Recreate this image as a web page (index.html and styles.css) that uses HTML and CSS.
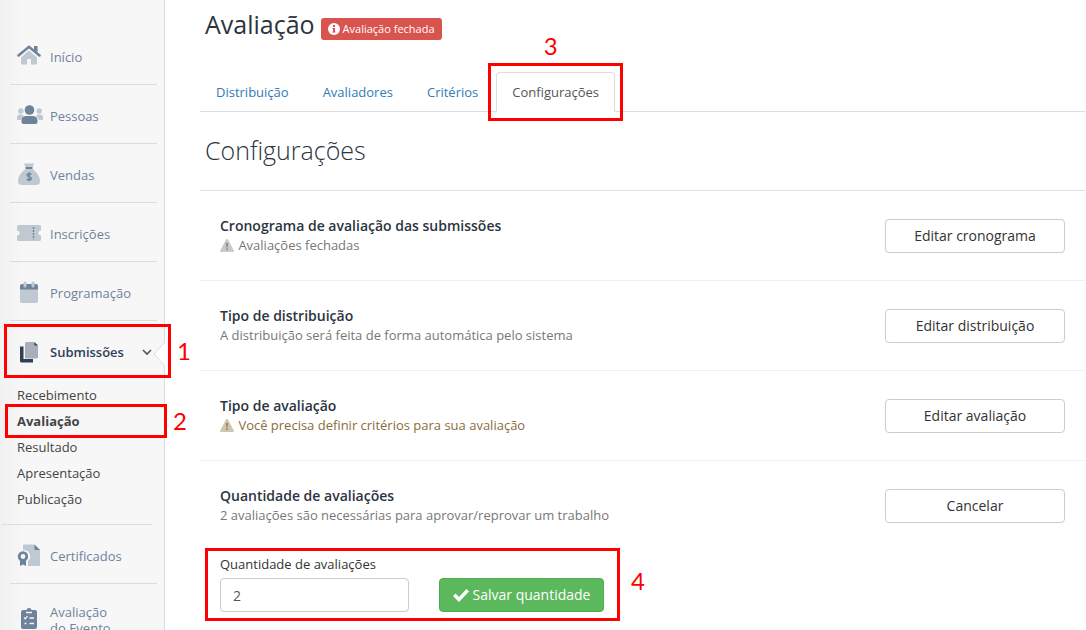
FILE: index.html
```html
<!DOCTYPE html>
<html lang="pt-BR">
  <head>
    <meta charset="UTF-8" />
    <title>Avaliação - Configurações</title>
    <link rel="stylesheet" href="styles.css">
  </head>
  <body>
    <div class="app">
      <nav class="sidebar">
        <a href="#" class="nav-item">
          <svg class="icon" width="26" height="26" viewBox="0 0 26 26">
            <path class="soft" d="M4 14.500L12 7.500l8 7V20.500a1 1 0 0 1-1 1h-5v-5.500h-4V21.500H5a1 1 0 0 1-1-1z" />
            <path class="stroke" d="M1.500 12.500L12 3.800l10.500 8.700" />
            <path class="dark" d="M17 3h3.500v7l-3.500-3z" />
          </svg>
          Início
        </a>
        <a href="#" class="nav-item">
          <svg class="icon" width="26" height="26" viewBox="0 0 26 26">
            <circle class="soft" cx="3.800" cy="9" r="2.700" />
            <circle class="soft" cx="22.200" cy="9" r="2.700" />
            <path class="soft" d="M0 18v-2.500a3 3 0 0 1 3-3h2.500L7 14l-3 4zM26 18v-2.500a3 3 0 0 0-3-3h-2.500L19 14l3 4z" />
            <circle class="dark" cx="12.500" cy="8" r="4.800" />
            <path class="dark" d="M4.500 20v-1.500a4.500 4.500 0 0 1 4.500-4.500h7a4.500 4.500 0 0 1 4.500 4.500V20a2 2 0 0 1-2 2h-12a2 2 0 0 1-2-2z" />
          </svg>
          Pessoas
        </a>
        <a href="#" class="nav-item">
          <svg class="icon" width="26" height="26" viewBox="0 0 26 26">
            <path class="soft" d="M7 2.500h10L15.500 6h-7zM8.500 8h7C19 10.500 23 15 23 20a4 4 0 0 1-4 4H5a4 4 0 0 1-4-4c0-5 4-9.500 7.500-12z" />
            <path class="dark" d="M8.500 6h7v2h-7z" />
            <path class="line" d="M14.500 13.500c-1-1.300-4.500-1.300-4.500.5s4.500 1.500 4.500 3.500-3.500 2-4.700.5M12.200 11.300v9" />
          </svg>
          Vendas
        </a>
        <a href="#" class="nav-item">
          <svg class="icon" width="26" height="26" viewBox="0 0 26 26">
            <path class="soft" d="M1.500 5h21a1.500 1.500 0 0 1 1.500 1.500V10.500a2.500 2.500 0 0 0 0 5v4a1.500 1.500 0 0 1-1.500 1.500h-21A1.500 1.500 0 0 1 0 19.500V15.500a2.500 2.500 0 0 0 0-5V6.500A1.500 1.500 0 0 1 1.500 5z" />
            <path class="line" stroke-dasharray="2 1" d="M16.500 7v12.500" />
          </svg>
          Inscrições
        </a>
        <a href="#" class="nav-item">
          <svg class="icon" width="26" height="26" viewBox="0 0 26 26">
            <path class="soft" d="M3 10h18v12a2 2 0 0 1-2 2H5a2 2 0 0 1-2-2z" />
            <path class="dark" d="M3 10.500V7a2 2 0 0 1 2-2h14a2 2 0 0 1 2 2v3.500z" />
            <rect class="soft" x="6.500" y="2.500" width="3" height="6" rx="1.500" />
            <rect class="soft" x="14.500" y="2.500" width="3" height="6" rx="1.500" />
          </svg>
          Programação
        </a>
        <div class="nav-group">
          <a href="#" class="nav-item active">
            <svg class="icon" width="26" height="26" viewBox="0 0 26 26">
              <path class="navy" d="M3 7.500h3.500V20H16v3.500H4.500A1.500 1.500 0 0 1 3 22z" />
              <path class="gray" d="M9.500 3H17l4 4v11.500a1 1 0 0 1-1 1H9a1 1 0 0 1-1-1v-14A1.500 1.500 0 0 1 9.500 3z" />
              <path class="navy" d="M17.500 3L21 6.500h-3.500z" />
            </svg>
            Submissões
            <svg class="chevron" width="10" height="8" viewBox="0 0 10 8">
              <path d="M1 2l4 4 4-4" />
            </svg>
          </a>
          <svg class="notch" width="12" height="26" viewBox="0 0 12 26">
            <path class="notch-fill" d="M12 1L1 13l11 12z" />
            <path class="notch-line" d="M12 1L1 13l11 12" />
          </svg>
          <div class="callout callout-menu"><b>1</b></div>
        </div>
        <ul class="submenu">
          <li><a href="#">Recebimento</a></li>
          <li class="current"><a href="#">Avaliação</a><div class="callout callout-sub"><b>2</b></div></li>
          <li><a href="#">Resultado</a></li>
          <li><a href="#">Apresentação</a></li>
          <li><a href="#">Publicação</a></li>
        </ul>
        <a href="#" class="nav-item">
          <svg class="icon" width="26" height="26" viewBox="0 0 26 26">
            <path class="soft" d="M7 2.500h10.500L23 8v15a1 1 0 0 1-1 1H11v-5a6 6 0 0 0-5-10.500V3.500a1 1 0 0 1 1-1z" />
            <path class="dark" d="M17.500 2.500L23 8h-5.500z" />
            <path class="dark" d="M3 17.500h6V24l-3-1.500L3 24z" />
            <circle class="ring" cx="6" cy="14.500" r="3.800" />
          </svg>
          Certificados
        </a>
        <a href="#" class="nav-item two-lines">
          <svg class="icon" width="26" height="26" viewBox="0 0 26 26">
            <path class="dark" d="M6 4h3.500a2.600 2.600 0 0 1 5 0H18a2 2 0 0 1 2 2v15a2 2 0 0 1-2 2H6a2 2 0 0 1-2-2V6a2 2 0 0 1 2-2z" />
            <path class="mark" d="M9 6.500h6M12.500 12H17M12.500 17.500H17M7 11.500l1.300 1.300 2.200-2.600M7.500 17.500h2" />
          </svg>
          <span>Avaliação<br>do Evento</span>
        </a>
      </nav>

      <main class="main">
        <header class="page-head">
          <h1>Avaliação</h1>
          <span class="badge">
            <svg width="12" height="12" viewBox="0 0 12 12">
              <circle cx="6" cy="6" r="6" fill="#fff" />
              <path d="M5 2h2v2H5zM4.500 5H7v3.500h.5v1h-3v-1H5V6h-.5z" fill="#d9534f" />
            </svg>
            Avaliação fechada
          </span>
        </header>

        <div class="tabs">
          <a href="#" class="tab">Distribuição</a>
          <a href="#" class="tab">Avaliadores</a>
          <a href="#" class="tab">Critérios</a>
          <a href="#" class="tab selected">Configurações<span class="callout callout-tab"><b>3</b></span></a>
        </div>

        <h2>Configurações</h2>

        <section class="row">
          <div>
            <h3>Cronograma de avaliação das submissões</h3>
            <p>
              <svg class="warn" width="15" height="13" viewBox="0 0 15 13">
                <path d="M7 0a1 1 0 0 1 1 .6l5.800 11A1 1 0 0 1 13 13H1a1 1 0 0 1-.8-1.400L6 .6A1 1 0 0 1 7 0z" opacity=".4" />
                <path d="M6.200 4h1.600l-.3 4.500h-1zM6.300 9.500h1.400V11H6.300z" />
              </svg>
              Avaliações fechadas
            </p>
          </div>
          <button type="button" class="btn">Editar cronograma</button>
        </section>

        <section class="row">
          <div>
            <h3>Tipo de distribuição</h3>
            <p>A distribuição será feita de forma automática pelo sistema</p>
          </div>
          <button type="button" class="btn">Editar distribuição</button>
        </section>

        <section class="row">
          <div>
            <h3>Tipo de avaliação</h3>
            <p class="text-warning">
              <svg class="warn" width="15" height="13" viewBox="0 0 15 13">
                <path d="M7 0a1 1 0 0 1 1 .6l5.800 11A1 1 0 0 1 13 13H1a1 1 0 0 1-.8-1.400L6 .6A1 1 0 0 1 7 0z" opacity=".4" />
                <path d="M6.200 4h1.600l-.3 4.500h-1zM6.300 9.500h1.400V11H6.300z" />
              </svg>
              Você precisa definir critérios para sua avaliação
            </p>
          </div>
          <button type="button" class="btn">Editar avaliação</button>
        </section>

        <section class="row last">
          <div>
            <h3>Quantidade de avaliações</h3>
            <p>2 avaliações são necessárias para aprovar/reprovar um trabalho</p>
          </div>
          <button type="button" class="btn">Cancelar</button>
        </section>

        <form class="amount-form">
          <div class="field">
            <label for="amount">Quantidade de avaliações</label>
            <input type="text" id="amount" value="2">
          </div>
          <button type="button" class="btn btn-success">
            <svg width="16" height="13" viewBox="0 0 16 13">
              <path d="M0 7l2.500-2.500L6 8l7.500-8L16 2.500 6 13z" fill="#fff" />
            </svg>
            Salvar quantidade
          </button>
          <div class="callout callout-form"><b>4</b></div>
        </form>
      </main>
    </div>
  </body>
</html>
```

FILE: styles.css
```css
* {
  box-sizing: border-box;
}

body {
  margin: 0;
  font-family: "Open Sans", sans-serif;
  font-size: 13px;
  line-height: 19px;
  color: #333;
  background: #fff;
}

a {
  color: #337ab7;
  text-decoration: none;
}

h1, h2, h3, p, ul {
  margin: 0;
  padding: 0;
}

.app {
  display: flex;
  height: 100vh;
  overflow: hidden;
}

/* sidebar */
.sidebar {
  flex: 0 0 165px;
  padding-top: 26px;
  border-right: 1px solid #d5dde6;
  background: linear-gradient(to right, #f1f1f1, #f7f7f7 24px);
}

.nav-item {
  display: flex;
  align-items: center;
  gap: 7px;
  height: 59px;
  margin: 0 7px 0 10px;
  padding: 5px 0 0 7px;
  border-bottom: 1px solid #d5dde6;
  color: #6f829c;
}

.nav-item.active {
  height: 61px;
  padding-top: 1px;
  border-bottom: 0;
  color: #2f405a;
  font-weight: 600;
}

.nav-item.two-lines {
  height: 68px;
  line-height: 16px;
}

.icon {
  flex: none;
  margin-top: -3px;
}

.active .icon {
  margin-top: -1px;
}

.soft { fill: #c0c8d2; }
.dark { fill: #6f829c; }
.navy { fill: #2f405a; }
.gray { fill: #a9afb8; }

.stroke, .line, .mark, .ring {
  fill: none;
  stroke: #6f829c;
}

.stroke {
  stroke-width: 2.5;
  stroke-linecap: round;
}

.line {
  stroke-width: 1.4;
}

.mark {
  stroke: #f7f7f7;
  stroke-width: 1.3;
}

.ring {
  stroke-width: 2.8;
}

.nav-group {
  position: relative;
}

.chevron {
  margin-left: 11px;
  fill: none;
  stroke: #4a5668;
  stroke-width: 1.6;
}

.notch {
  position: absolute;
  top: 20px;
  right: -1px;
}

.notch-fill { fill: #fff; }

.notch-line {
  fill: none;
  stroke: #d5dde6;
}

.submenu {
  list-style: none;
  width: 150px;
  margin-left: 2px;
  padding-bottom: 12px;
  border-bottom: 1px solid #d5dde6;
}

.submenu li {
  position: relative;
  padding-left: 15px;
  line-height: 26px;
}

.submenu a {
  color: #444;
}

.submenu .current {
  font-weight: 700;
}

/* content */
.main {
  flex: 1;
  margin: 0 1px 0 35px;
}

.page-head {
  display: flex;
  align-items: center;
  gap: 6px;
  height: 47px;
  padding-left: 5px;
}

h1, h2 {
  font-size: 25px;
  line-height: 36px;
  font-weight: 400;
  color: #2b3440;
}

.badge {
  display: flex;
  align-items: center;
  gap: 3px;
  height: 22px;
  margin-top: 10px;
  padding: 0 7px;
  border-radius: 3px;
  background: #d9534f;
  color: #fff;
  font-size: 11px;
}

.tabs {
  display: flex;
  gap: 2px;
  margin-top: 25px;
  border-bottom: 1px solid #ddd;
}

.tab {
  position: relative;
  margin-bottom: -1px;
  padding: 10px 15px 9px;
  border: 1px solid transparent;
  border-radius: 4px 4px 0 0;
}

.tab.selected {
  border-color: #ddd #ddd #fff;
  color: #555;
}

h2 {
  padding: 20px 5px 22px;
  border-bottom: 1px solid #dfe1e8;
  font-weight: 300;
}

.row {
  display: flex;
  align-items: center;
  justify-content: space-between;
  padding: 25px 20px;
  border-bottom: 1px solid #eee;
}

.row.last {
  border-bottom: 0;
}

h3 {
  font-size: 14px;
  line-height: 20px;
  font-weight: 600;
  color: #2b3440;
}

.row p {
  color: #777;
}

.row .text-warning {
  color: #8a6d3b;
}

.warn {
  vertical-align: -2px;
  fill: currentColor;
}

.btn {
  width: 180px;
  height: 34px;
  border: 1px solid #ccc;
  border-radius: 4px;
  background: #fff;
  color: #333;
  font: 14px/20px "Open Sans", sans-serif;
}

.btn-success {
  display: flex;
  align-items: center;
  justify-content: center;
  gap: 4px;
  width: 165px;
  border-color: #4cae4c;
  background: #5cb85c;
  color: #fff;
}

.amount-form {
  position: relative;
  display: flex;
  align-items: flex-end;
  gap: 30px;
  margin-top: 5px;
  padding-left: 20px;
}

.field {
  width: 189px;
}

.field label {
  display: block;
  margin-bottom: 4px;
}

.field input {
  display: block;
  width: 100%;
  height: 34px;
  padding: 6px 12px;
  border: 1px solid #ccc;
  border-radius: 4px;
  color: #555;
  font: 14px/20px "Open Sans", sans-serif;
}

/* numbered red marks drawn over the page */
.callout {
  position: absolute;
  z-index: 1;
  border: 3px solid #f00;
  pointer-events: none;
}

.callout b {
  position: absolute;
  top: 50%;
  left: 100%;
  margin: -14px 0 0 9px;
  color: #f00;
  font: 24px/28px Lato, sans-serif;
}

.callout-menu {
  top: 3px;
  left: 4px;
  width: 167px;
  height: 54px;
}

.callout-sub {
  top: -4px;
  left: 3px;
  width: 162px;
  height: 34px;
}

.callout-tab {
  inset: -10px -9px;
}

.callout-tab b {
  top: -20px;
  left: 50%;
  margin: -14px 0 0 -12px;
}

.callout-form {
  top: -7px;
  left: 5px;
  width: 415px;
  height: 73px;
}

.callout-form b {
  margin: -18px 0 0 14px;
}
```
